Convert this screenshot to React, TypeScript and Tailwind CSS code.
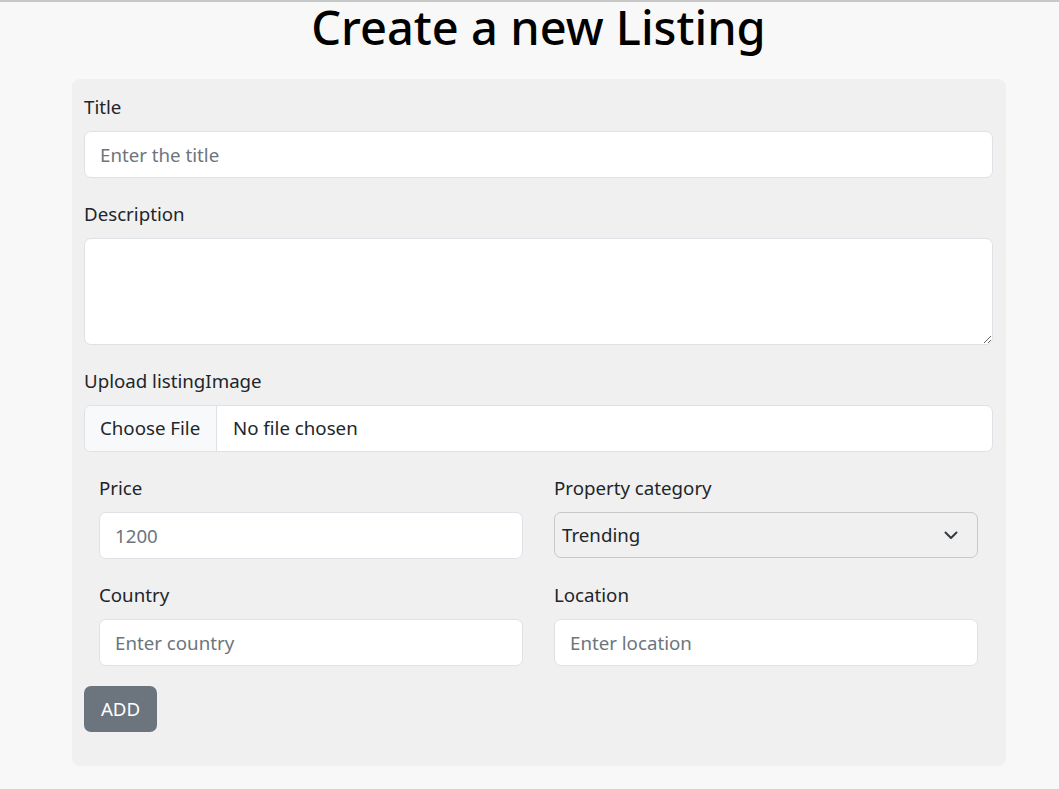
function Label({ children }: { children: React.ReactNode }) {
  return <label className="block h-[30px] leading-[30px] mb-[9px] text-[18.7px] text-[#212529]">{children}</label>
}

function TextInput({ placeholder }: { placeholder: string }) {
  return (
    <input
      className="block w-full h-[47px] px-[15px] rounded-[7px] border border-[#dee2e6] bg-white text-[18.7px] text-[#212529] placeholder:text-[#6c757d] outline-none"
      placeholder={placeholder}
    />
  )
}

export default function App() {
  return (
    <div
      className="min-h-screen w-full bg-[#f8f8f8] border-t-2 border-[#c8c8c8]"
      style={{ fontFamily: '"Noto Sans", "Open Sans", sans-serif' }}
    >
      <h1 className="-mt-[2px] text-center text-[47px] leading-[54px] font-medium text-black pl-[18px]">Create a new Listing</h1>
      <div className="ml-[72px] mt-[25px] w-[934px] rounded-[8px] bg-[#f0f0f0] pt-[13px] pb-[34px] pl-[12px] pr-[13px]">
        <Label>Title</Label>
        <TextInput placeholder="Enter the title" />

        <div className="mt-[21px]">
          <Label>Description</Label>
          <textarea className="block w-full h-[107px] rounded-[7px] border border-[#dee2e6] bg-white px-[15px] py-[8px] text-[18.7px] outline-none" />
        </div>

        <div className="mt-[21px]">
          <Label>Upload listingImage</Label>
          <div className="flex h-[47px] w-full overflow-hidden rounded-[7px] border border-[#dee2e6] bg-white text-[18.7px] text-[#212529]">
            <div className="flex items-center whitespace-nowrap w-[132px] shrink-0 px-[15px] bg-[#f8f9fa] border-r border-[#dee2e6]">Choose File</div>
            <div className="flex items-center px-[16px] whitespace-nowrap">No file chosen</div>
          </div>
        </div>

        <div className="grid grid-cols-2 gap-x-[31px] px-[15px] mt-[21px]">
          <div>
            <Label>Price</Label>
            <TextInput placeholder="1200" />
          </div>
          <div>
            <Label>Property category</Label>
            <div className="flex items-center justify-between h-[46px] rounded-[7px] border border-[#c8c8c8] bg-[#f0f0f0] pl-[7px] pr-[19px] text-[18.7px] text-[#212529]">
              <span>Trending</span>
              <svg width="14" height="9" viewBox="0 0 14 9" fill="none">
                <polyline points="1.5,1.5 7,7 12.5,1.5" stroke="#343a40" strokeWidth="2" strokeLinecap="round" strokeLinejoin="round" />
              </svg>
            </div>
          </div>
          <div className="mt-[21px]">
            <Label>Country</Label>
            <TextInput placeholder="Enter country" />
          </div>
          <div className="mt-[21px]">
            <Label>Location</Label>
            <TextInput placeholder="Enter location" />
          </div>
        </div>

        <button className="mt-[20px] h-[46px] w-[73px] rounded-[7px] bg-[#6c757d] text-white text-[18.7px]">ADD</button>
      </div>
    </div>
  )
}
